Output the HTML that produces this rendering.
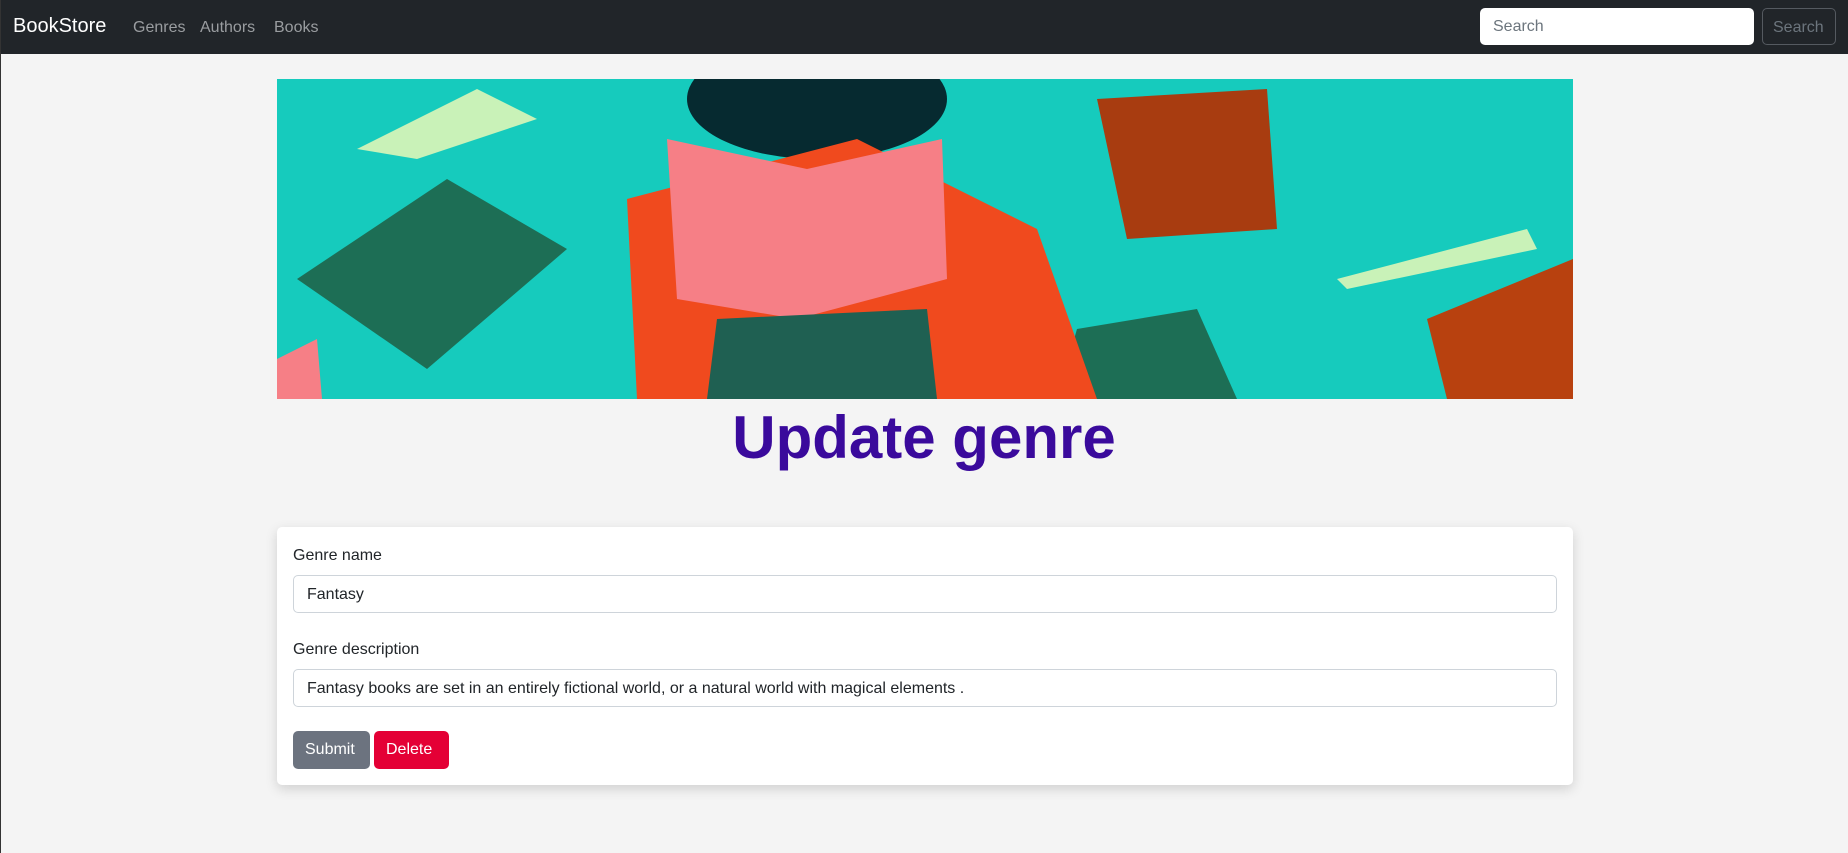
<!DOCTYPE html>
<html><head><meta charset="utf-8"><style>
*{box-sizing:border-box;margin:0;padding:0}
body{width:1848px;height:853px;background:#f4f4f4;font-family:"Liberation Sans",sans-serif;overflow:hidden;position:relative}
.lb{position:absolute;left:0;top:0;width:1px;height:853px;background:#333}
.nav{position:absolute;left:0;top:0;width:1848px;height:54px;background:#212529}
.brand{position:absolute;left:13px;top:15px;color:#fff;font-size:20px}
.nl{position:absolute;top:19px;color:#9a9da0;font-size:16px}
.si{position:absolute;left:1480px;top:8px;width:274px;height:37px;background:#fff;border-radius:5px;color:#6c757d;font-size:16px;padding:10px 13px}
.sb{position:absolute;left:1762px;top:8px;width:74px;height:37px;border:1px solid #555a60;border-radius:5px;color:#6c757d;font-size:16px;padding:10px 10px}
.hero{position:absolute;left:277px;top:79px;width:1296px;height:320px;background:#14c9bc;overflow:hidden}
h1{position:absolute;left:0;width:1848px;top:402px;text-align:center;color:#3a0a9c;font-size:60px;font-weight:bold;line-height:72px}
.card{position:absolute;left:277px;top:527px;width:1296px;height:258px;background:#fff;border-radius:5px;box-shadow:0 4px 12px rgba(0,0,0,.15)}
.lab{position:absolute;left:16px;font-size:16px;color:#212529}
.inp{position:absolute;left:16px;width:1264px;height:38px;border:1px solid #ced4da;border-radius:5px;font-size:16px;color:#212529;padding:10px 13px}
.btn{position:absolute;top:204px;height:38px;border-radius:5px;color:#fff;font-size:16px;padding:10px 12px}
</style></head><body>
<div class="nav">
<div class="brand">BookStore</div>
<div class="nl" style="left:133px">Genres</div>
<div class="nl" style="left:200px">Authors</div>
<div class="nl" style="left:274px">Books</div>
<div class="si">Search</div>
<div class="sb">Search</div>
</div>
<div class="lb"></div>
<div class="hero">
<svg width="1296" height="320" viewBox="0 0 1296 320">
<rect width="1296" height="320" fill="#16cbbd"/>
<polygon points="20,200 170,100 290,170 150,290" fill="#1d6e55"/>
<polygon points="80,70 200,10 260,40 140,80" fill="#c9f2b8"/>
<polygon points="820,20 990,10 1000,150 850,160" fill="#a83c10"/>
<polygon points="1150,240 1296,180 1296,320 1170,320" fill="#b8410f"/>
<polygon points="800,250 920,230 960,320 780,320" fill="#1d6e55"/>
<ellipse cx="540" cy="20" rx="130" ry="60" fill="#062a30"/>
<polygon points="350,120 580,60 760,150 820,320 360,320" fill="#f04a1e"/>
<polygon points="390,60 530,90 665,60 670,200 520,240 400,220" fill="#f67f86"/>
<polygon points="440,240 650,230 660,320 430,320" fill="#1f6052"/>
<polygon points="0,280 40,260 45,320 0,320" fill="#f67f86"/>
<polygon points="1060,200 1250,150 1260,170 1070,210" fill="#c9f2b8"/>
</svg>
</div>
<h1>Update genre</h1>
<div class="card">
<div class="lab" style="top:20px">Genre name</div>
<div class="inp" style="top:48px">Fantasy</div>
<div class="lab" style="top:114px">Genre description</div>
<div class="inp" style="top:142px">Fantasy books are set in an entirely fictional world, or a natural world with magical elements .</div>
<div class="btn" style="left:16px;width:77px;background:#6c737f">Submit</div>
<div class="btn" style="left:97px;width:75px;background:#e40035">Delete</div>
</div>
</body></html>
